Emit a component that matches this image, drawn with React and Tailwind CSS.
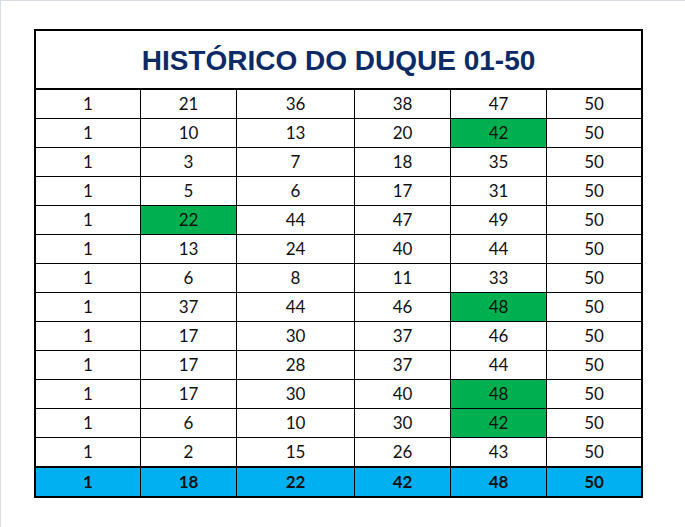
const rows = [
  [1, 21, 36, 38, 47, 50],
  [1, 10, 13, 20, 42, 50],
  [1, 3, 7, 18, 35, 50],
  [1, 5, 6, 17, 31, 50],
  [1, 22, 44, 47, 49, 50],
  [1, 13, 24, 40, 44, 50],
  [1, 6, 8, 11, 33, 50],
  [1, 37, 44, 46, 48, 50],
  [1, 17, 30, 37, 46, 50],
  [1, 17, 28, 37, 44, 50],
  [1, 17, 30, 40, 48, 50],
  [1, 6, 10, 30, 42, 50],
  [1, 2, 15, 26, 43, 50],
];

// row index -> column index of the highlighted cell
const green = { 1: 4, 4: 1, 7: 4, 10: 4, 11: 4 };

const summary = [1, 18, 22, 42, 48, 50];

function Cell({ value, last, height, className }) {
  return (
    <div
      className={`flex items-center justify-center border-black ${
        last ? "" : "border-r"
      } ${height} ${className}`}
    >
      {value}
    </div>
  );
}

export default function App() {
  return (
    <div className="min-h-screen bg-white border-t border-l border-[#d8dde4] pt-[28px] pl-[33px]">
      <div className="w-[609px] border-2 border-black font-['Lato',sans-serif] text-[17px] text-[#111]">
        <div className="h-[59px] pt-[2px] border-b-2 border-black flex items-center justify-center font-['Liberation_Sans',Arial,sans-serif] font-bold text-[28px] text-[#0b2a66]">
          HISTÓRICO DO DUQUE 01-50
        </div>
        <div className="grid grid-cols-[105px_96px_118px_96px_96px_94px]">
          {rows.map((row, r) =>
            row.map((v, c) => (
              <Cell
                key={`${r}-${c}`}
                value={v}
                last={c === 5}
                height={
                  r === rows.length - 1
                    ? "h-[30px] border-b-2"
                    : "h-[29px] border-b"
                }
                className={green[r] === c ? "bg-[#00b050]" : "bg-white"}
              />
            ))
          )}
          {summary.map((v, c) => (
            <Cell
              key={`s-${c}`}
              value={v}
              last={c === 5}
              height="h-[28px]"
              className="bg-[#00b0f0] font-bold"
            />
          ))}
        </div>
      </div>
    </div>
  );
}
